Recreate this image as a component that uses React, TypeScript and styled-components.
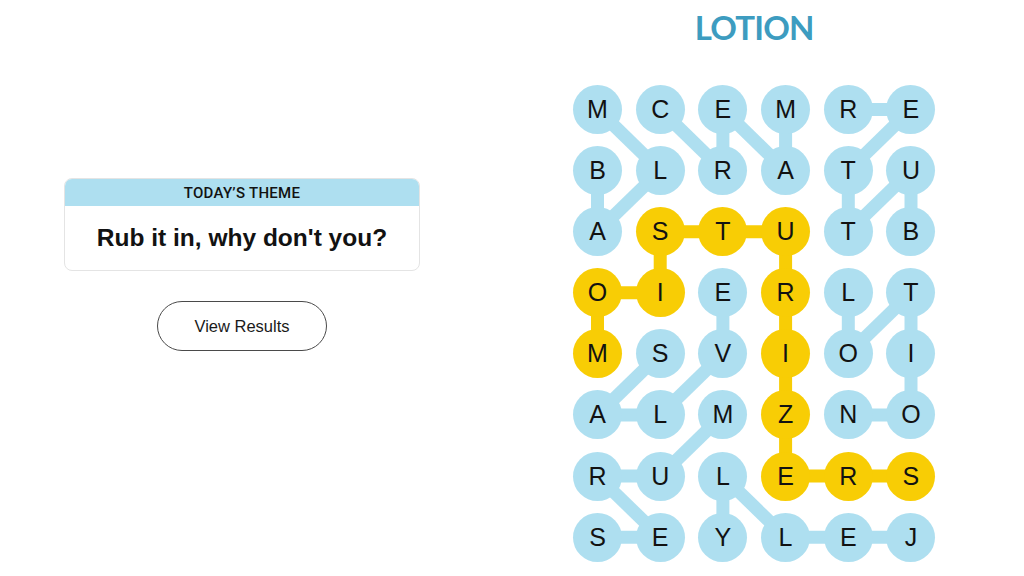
import React from "react";
import styled, { createGlobalStyle } from "styled-components";

const GRID = [
  "MCEMRE",
  "BLRATU",
  "ASTUTB",
  "OIERLT",
  "MSVIOI",
  "ALMZNO",
  "RULERS",
  "SEYLEJ",
];

type Cell = [number, number];

// each found word as a path of [row, col]
const WORDS: { path: Cell[]; spangram?: boolean }[] = [
  { path: [[1, 0], [2, 0], [1, 1], [0, 0]] }, // BALM
  { path: [[0, 1], [1, 2], [0, 2], [1, 3], [0, 3]] }, // CREAM
  { path: [[2, 5], [1, 5], [2, 4], [1, 4], [0, 5], [0, 4]] }, // BUTTER
  { path: [[3, 4], [4, 4], [3, 5], [4, 5], [5, 5], [5, 4]] }, // LOTION
  { path: [[4, 1], [5, 0], [5, 1], [4, 2], [3, 2]] }, // SALVE
  { path: [[7, 0], [7, 1], [6, 0], [6, 1], [5, 2]] }, // SERUM
  { path: [[7, 5], [7, 4], [7, 3], [6, 2], [7, 2]] }, // JELLY
  {
    path: [
      [4, 0], [3, 0], [3, 1], [2, 1], [2, 2], [2, 3],
      [3, 3], [4, 3], [5, 3], [6, 3], [6, 4], [6, 5],
    ],
    spangram: true,
  }, // MOISTURIZERS
];

const BLUE = "#aedff0";
const YELLOW = "#f8cd05";
const CELL = 49;
const COL_GAP = 13.7;
const ROW_GAP = 12.1;

const cx = (c: number) => CELL / 2 + c * (CELL + COL_GAP);
const cy = (r: number) => CELL / 2 + r * (CELL + ROW_GAP);

const spangramCells = new Set(
  WORDS.filter((w) => w.spangram).flatMap((w) => w.path.map(([r, c]) => `${r}-${c}`))
);

const App = () => {
  return (
    <>
      <GlobalStyle />
      <Page>
        <LeftColumn>
          <ThemeCard>
            <ThemeHeader>Today’s Theme</ThemeHeader>
            <ThemeBody>Rub it in, why don't you?</ThemeBody>
          </ThemeCard>
          <ResultsButton type="button">View Results</ResultsButton>
        </LeftColumn>

        <RightColumn>
          <FoundWord>LOTION</FoundWord>
          <Board>
            <Connectors
              width={cx(5) + CELL / 2}
              height={cy(7) + CELL / 2}
            >
              {WORDS.map((w, i) =>
                w.path.slice(1).map(([r, c], j) => {
                  const [pr, pc] = w.path[j];
                  return (
                    <line
                      key={`${i}-${j}`}
                      x1={cx(pc)}
                      y1={cy(pr)}
                      x2={cx(c)}
                      y2={cy(r)}
                      stroke={w.spangram ? YELLOW : BLUE}
                      strokeWidth={13}
                    />
                  );
                })
              )}
            </Connectors>
            {GRID.map((row, r) =>
              row.split("").map((letter, c) => (
                <LetterCell key={`${r}-${c}`} $spangram={spangramCells.has(`${r}-${c}`)}>
                  {letter}
                </LetterCell>
              ))
            )}
          </Board>
        </RightColumn>
      </Page>
    </>
  );
};

const GlobalStyle = createGlobalStyle`
  html, body {
    margin: 0;
    padding: 0;
    background: #ffffff;
  }
  body {
    font-family: "Liberation Sans", Arial, sans-serif;
    color: #121212;
  }
`;

const Page = styled.main`
  display: flex;
  width: 1024px;
  height: 576px;
  overflow: hidden;
`;

const LeftColumn = styled.section`
  width: 484px;
  display: flex;
  flex-direction: column;
  align-items: center;
  padding-top: 178px;
  box-sizing: border-box;
`;

const ThemeCard = styled.div`
  width: 356px;
  border: 1px solid #e4e4e4;
  border-radius: 8px;
  overflow: hidden;
  box-sizing: border-box;
`;

const ThemeHeader = styled.div`
  height: 27px;
  background: ${BLUE};
  display: flex;
  align-items: center;
  justify-content: center;
  font-family: Roboto, "Liberation Sans", sans-serif;
  font-size: 15px;
  font-weight: 500;
  letter-spacing: 0.3px;
  text-transform: uppercase;
  color: #121212;
`;

const ThemeBody = styled.div`
  height: 64px;
  display: flex;
  align-items: center;
  justify-content: center;
  font-size: 24.5px;
  font-weight: 700;
  color: #121212;
`;

const ResultsButton = styled.button`
  margin-top: 30px;
  width: 170px;
  height: 50px;
  border: 1px solid #4a4a4a;
  border-radius: 25px;
  background: #ffffff;
  font-family: "Liberation Sans", Arial, sans-serif;
  font-size: 16.5px;
  color: #1a1a1a;
  cursor: pointer;
`;

const RightColumn = styled.section`
  margin-left: 89px;
  display: flex;
  flex-direction: column;
  align-items: center;
`;

const FoundWord = styled.h2`
  margin: 7px 0 0;
  height: 78px;
  font-family: Lato, "Liberation Sans", sans-serif;
  font-size: 33px;
  font-weight: 700;
  letter-spacing: -0.8px;
  line-height: 40px;
  color: #3d9cc0;
`;

const Board = styled.div`
  position: relative;
  display: grid;
  grid-template-columns: repeat(6, ${CELL}px);
  grid-auto-rows: ${CELL}px;
  column-gap: ${COL_GAP}px;
  row-gap: ${ROW_GAP}px;
`;

const Connectors = styled.svg`
  position: absolute;
  left: 0;
  top: 0;
  z-index: 0;
`;

const LetterCell = styled.div<{ $spangram?: boolean }>`
  position: relative;
  z-index: 1;
  width: ${CELL}px;
  height: ${CELL}px;
  border-radius: 50%;
  background: ${({ $spangram }) => ($spangram ? YELLOW : BLUE)};
  display: flex;
  align-items: center;
  justify-content: center;
  font-size: 25px;
  color: #121212;
`;

export default App;
